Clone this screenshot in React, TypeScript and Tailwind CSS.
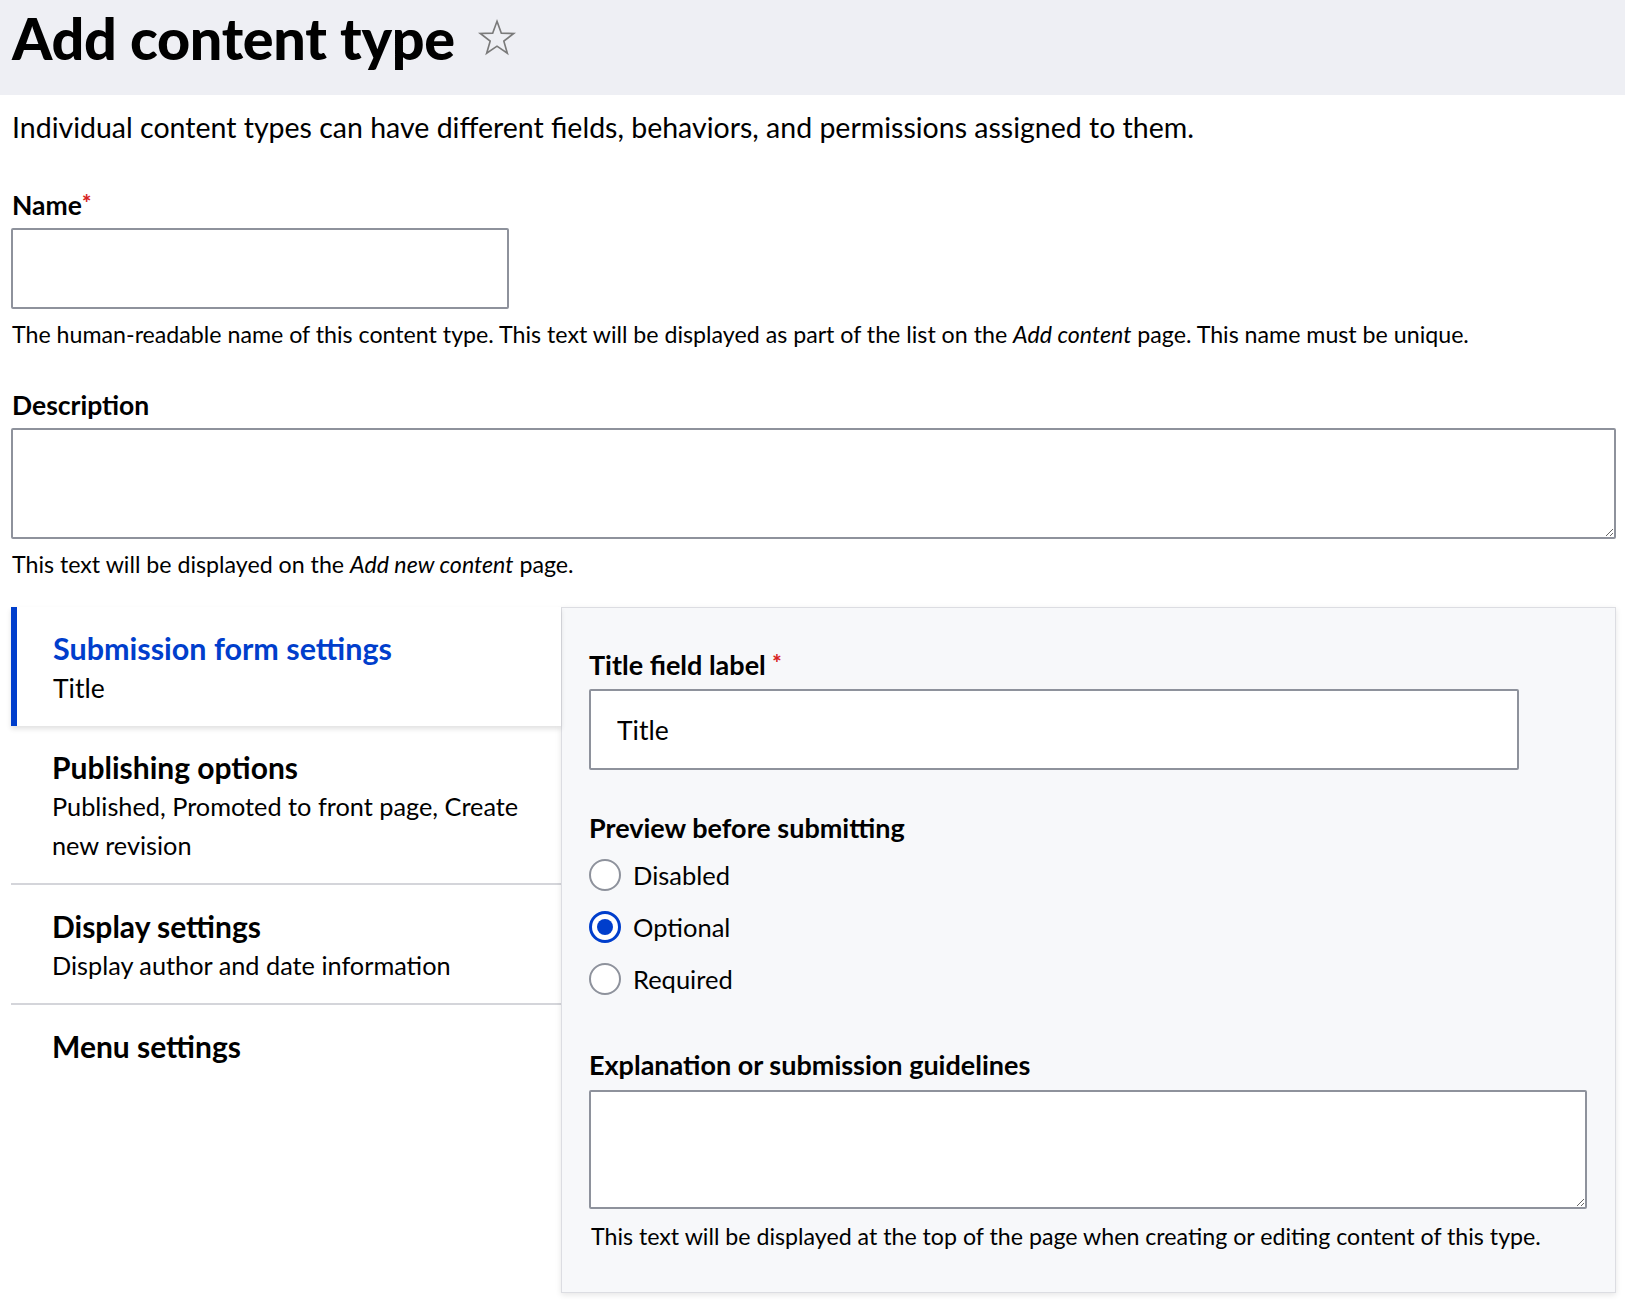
import { useState } from "react";

const tabs = [
    { title: "Submission form settings", summary: "Title" },
    { title: "Publishing options", summary: "Published, Promoted to front page, Create new revision" },
    { title: "Display settings", summary: "Display author and date information" },
    { title: "Menu settings", summary: "" },
];

function Radio({ label, checked }: { label: string; checked?: boolean }) {
    return (
        <label className="flex items-center h-[52px] gap-3 cursor-pointer">
            {checked ? (
                <span className="w-[32px] h-[32px] rounded-full border-[3px] border-[#003ecc] bg-white flex items-center justify-center">
                    <span className="w-[16px] h-[16px] rounded-full bg-[#003ecc]" />
                </span>
            ) : (
                <span className="w-[32px] h-[32px] rounded-full border-2 border-[#8e929c] bg-white" />
            )}
            <span className="text-[25.5px] text-black">{label}</span>
        </label>
    );
}

export default function App() {
    const [active] = useState(0);

    return (
        <div className="min-h-screen bg-white text-black font-['Lato',sans-serif]">
            <div className="h-[95px] bg-[#eeeff4] flex items-start pl-3 pt-[3px] gap-[22px]">
                <h1 className="text-[57.5px] font-black leading-[70px] tracking-[-0.3px]">Add content type</h1>
                <svg className="mt-[15px]" width="40" height="40" viewBox="0 0 24 24" fill="none" stroke="#7a7a7a" strokeWidth="1" strokeLinejoin="miter">
                    <polygon points="12,2 14.6,9.1 22,9.3 16.1,13.9 18.2,21.1 12,16.9 5.8,21.1 7.9,13.9 2,9.3 9.4,9.1" />
                </svg>
            </div>

            <div className="px-[11px]">
                <p className="mt-[14px] text-[28.5px] leading-[36px] pl-[1px]">
                    Individual content types can have different fields, behaviors, and permissions assigned to them.
                </p>

                <div className="mt-[45px] text-[26.5px] font-bold leading-[30px] pl-[1px]">
                    Name<span className="text-[#d72222] text-[22px] font-black align-top relative -top-[2px]">*</span>
                </div>
                <input type="text" className="mt-2 block w-[498px] h-[81px] border-2 border-[#8e929c] rounded-[2px] bg-white px-5 text-[24px] outline-none" />
                <p className="mt-[10px] text-[23.2px] leading-[30px] pl-[1px]">
                    The human-readable name of this content type. This text will be displayed as part of the list on the <em>Add content</em> page. This name must be unique.
                </p>

                <div className="mt-[41px] text-[26.5px] font-bold leading-[30px] pl-[1px]">Description</div>
                <textarea className="mt-2 block w-[1605px] h-[111px] border-2 border-[#8e929c] rounded-[2px] bg-white outline-none resize-y" />
                <p className="mt-[10px] text-[23.2px] leading-[30px] pl-[1px]">
                    This text will be displayed on the <em>Add new content</em> page.
                </p>

                <div className="mt-[28px] flex h-[686px] w-[1605px]">
                    <div className="w-[550px] shrink-0 bg-white">
                        {tabs.map((t, i) =>
                            i === active ? (
                                <div key={t.title} className="relative z-10 border-l-[6px] border-[#003ecc] bg-white pl-[36px] pt-[21px] pb-[18px] shadow-[0_3px_5px_rgba(0,0,0,0.12)]">
                                    <div className="text-[30.5px] font-bold leading-[40px] text-[#003ecc]">{t.title}</div>
                                    <div className="text-[26.5px] leading-[40px]">{t.summary}</div>
                                </div>
                            ) : (
                                <div key={t.title} className={"pl-[41px] pr-10 pt-[21px] pb-[18px] " + (i < tabs.length - 1 ? "border-b-2 border-[#d4d5da]" : "")}>
                                    <div className="text-[30px] font-bold leading-[40px]">{t.title}</div>
                                    {t.summary && <div className="text-[25.3px] leading-[39px]">{t.summary}</div>}
                                </div>
                            )
                        )}
                    </div>

                    <div className="flex-1 bg-[#f7f8fa] border border-[#dcdde2] shadow-[0_2px_6px_rgba(0,0,0,0.1)] pl-[27px] pt-[42px]">
                        <div className="text-[27px] font-bold leading-[30px]">
                            Title field label <span className="text-[#d72222] text-[22px] font-black align-top relative -top-[2px]">*</span>
                        </div>
                        <input type="text" defaultValue="Title" className="mt-[9px] block w-[930px] h-[81px] border-2 border-[#8e929c] rounded-[2px] bg-white px-[26px] text-[26.5px] outline-none" />

                        <div className="mt-[43px] text-[27px] font-bold leading-[30px]">Preview before submitting</div>
                        <div className="mt-[6px]">
                            <Radio label="Disabled" />
                            <Radio label="Optional" checked />
                            <Radio label="Required" />
                        </div>

                        <div className="mt-[45px] text-[27px] font-bold leading-[30px]">Explanation or submission guidelines</div>
                        <textarea className="mt-[10px] block w-[998px] h-[119px] border-2 border-[#8e929c] rounded-[2px] bg-white outline-none resize-y" />
                        <p className="mt-3 text-[23.2px] leading-[30px] pl-[2px]">
                            This text will be displayed at the top of the page when creating or editing content of this type.
                        </p>
                    </div>
                </div>
            </div>
        </div>
    );
}
